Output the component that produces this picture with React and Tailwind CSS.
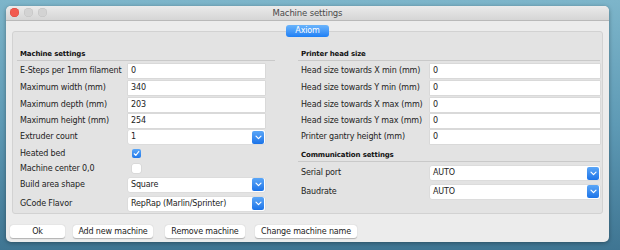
import React from "react";

const leftRows = [
  { label: "E-Steps per 1mm filament", type: "input", value: "0", h: "h-[17px]" },
  { label: "Maximum width (mm)", type: "input", value: "340", h: "h-[17px]" },
  { label: "Maximum depth (mm)", type: "input", value: "203", h: "h-[17px]" },
  { label: "Maximum height (mm)", type: "input", value: "254", h: "h-[16px]" },
  { label: "Extruder count", type: "select", value: "1", h: "h-[16px]" },
  { label: "Heated bed", type: "check", checked: true, h: "h-[17px]" },
  { label: "Machine center 0,0", type: "check", checked: false, h: "h-[13px]" },
  { label: "Build area shape", type: "select", value: "Square", h: "h-[19px]" },
  { label: "GCode Flavor", type: "select", value: "RepRap (Marlin/Sprinter)", h: "h-[19px]" },
];

const headRows = [
  { label: "Head size towards X min (mm)", value: "0", h: "h-[17px]" },
  { label: "Head size towards Y min (mm)", value: "0", h: "h-[17px]" },
  { label: "Head size towards X max (mm)", value: "0", h: "h-[17px]" },
  { label: "Head size towards Y max (mm)", value: "0", h: "h-[16px]" },
  { label: "Printer gantry height (mm)", value: "0", h: "h-[16px]" },
];

const commRows = [
  { label: "Serial port", value: "AUTO", h: "h-[18px]" },
  { label: "Baudrate", value: "AUTO", h: "h-[19px]" },
];

const TextField = ({ value }) => (
  <div className="flex-1 h-[14px] bg-white shadow-[0_0_0_0.5px_#cfcfcf] flex items-center pl-[3px] text-[#222]">
    {value}
  </div>
);

const SelectField = ({ value }) => (
  <div className="flex-1 h-[14px] bg-white shadow-[0_0_0_0.5px_#d6d6d6] flex items-center pl-[3px] text-[#222] rounded-[2px]">
    <span className="flex-1">{value}</span>
    <div className="w-[12px] h-[13px] rounded-[2px] bg-gradient-to-b from-[#5aa6f7] to-[#1a73e8] flex items-center justify-center mr-[1px]">
      <svg width="7" height="5" viewBox="0 0 7 5">
        <path d="M1 1.2 L3.5 3.7 L6 1.2" stroke="white" strokeWidth="1.2" fill="none" strokeLinecap="round" strokeLinejoin="round" />
      </svg>
    </div>
  </div>
);

const CheckBox = ({ checked }) =>
  checked ? (
    <div className="ml-[4px] w-[9px] h-[9px] rounded-[2px] bg-gradient-to-b from-[#5aa6f7] to-[#1f78ea] flex items-center justify-center">
      <svg width="7" height="7" viewBox="0 0 7 7">
        <path d="M1.2 3.8 L2.8 5.3 L5.8 1.5" stroke="white" strokeWidth="1.2" fill="none" strokeLinecap="round" strokeLinejoin="round" />
      </svg>
    </div>
  ) : (
    <div className="ml-[4px] w-[9px] h-[9px] rounded-[2px] bg-white shadow-[0_0_0_0.5px_#cfcfcf]" />
  );

const SectionHeading = ({ children, className = "" }) => (
  <div className={`h-[12px] flex items-center pl-[3px] border-b border-[#c9c9c9] font-bold text-[7px] text-[#111] ${className}`}>
    {children}
  </div>
);

const Button = ({ children, w }) => (
  <div className={`${w} h-[13px] bg-white rounded-[3px] shadow-[0_0.5px_1px_rgba(0,0,0,0.25)] flex items-center justify-center text-[#222]`}>
    {children}
  </div>
);

export default function App() {
  return (
    <div className="w-[620px] h-[250px] overflow-hidden bg-gradient-to-b from-[#7db5ca] via-[#5e9ab5] to-[#3f7592] pt-[6px] pl-[6px] font-['DejaVu_Sans',sans-serif] text-[8px] tracking-[-0.15px] leading-none">
      <div className="w-[603px] h-[236px] bg-[#ececec] rounded-[5px] shadow-[0_1px_4px_rgba(0,0,0,0.35)] overflow-hidden flex flex-col">
        {/* title bar */}
        <div className="relative h-[15px] bg-gradient-to-b from-[#ebebeb] to-[#d5d5d5] border-b border-[#b9b9b9] flex items-center justify-center">
          <div className="absolute left-[4px] top-[2px] flex gap-[5px]">
            <div className="w-[9px] h-[9px] rounded-full bg-[#f25a4f] shadow-[inset_0_0_0_0.5px_#d9473d]" />
            <div className="w-[9px] h-[9px] rounded-full bg-[#d3d3d3] shadow-[inset_0_0_0_0.5px_#c0c0c0]" />
            <div className="w-[9px] h-[9px] rounded-full bg-[#d3d3d3] shadow-[inset_0_0_0_0.5px_#c0c0c0]" />
          </div>
          <span className="text-[#4a4a4a] text-[8.5px]">Machine settings</span>
        </div>

        <div className="px-[6px] pt-[4px]">
          {/* tab */}
          <div className="relative z-10 flex justify-center">
            <div className="w-[43px] h-[12px] rounded-[3px] bg-gradient-to-b from-[#6ab4fb] to-[#1c7ff5] text-white flex items-center justify-center">
              Axiom
            </div>
          </div>

          {/* panel */}
          <div className="-mt-[6px] h-[183px] bg-[#e3e3e3] border border-[#d2d2d2] rounded-[3px] flex pl-[4px] pr-[2px]">
            <div className="w-[258px] pt-[17px] flex flex-col">
              <SectionHeading>Machine settings</SectionHeading>
              <div className="mt-[1px]">
                {leftRows.map((r) => (
                  <div key={r.label} className={`${r.h} flex items-center pr-[10px]`}>
                    <div className="w-[111px] pl-[3px] text-[#222] whitespace-nowrap">{r.label}</div>
                    {r.type === "input" && <TextField value={r.value} />}
                    {r.type === "select" && <SelectField value={r.value} />}
                    {r.type === "check" && <CheckBox checked={r.checked} />}
                  </div>
                ))}
              </div>
            </div>

            <div className="flex-1 ml-[23px] pt-[17px] flex flex-col">
              <SectionHeading>Printer head size</SectionHeading>
              <div className="mt-[1px]">
                {headRows.map((r) => (
                  <div key={r.label} className={`${r.h} flex items-center`}>
                    <div className="w-[132px] pl-[3px] text-[#222] whitespace-nowrap">{r.label}</div>
                    <TextField value={r.value} />
                  </div>
                ))}
              </div>
              <SectionHeading className="mt-[5px]">Communication settings</SectionHeading>
              <div className="mt-[2px]">
                {commRows.map((r) => (
                  <div key={r.label} className={`${r.h} flex items-center`}>
                    <div className="w-[132px] pl-[3px] text-[#222] whitespace-nowrap">{r.label}</div>
                    <SelectField value={r.value} />
                  </div>
                ))}
              </div>
            </div>
          </div>
        </div>

        {/* buttons */}
        <div className="flex items-center pl-[4px] mt-[11px]">
          <Button w="w-[55px]">Ok</Button>
          <div className="ml-[8px]"><Button w="w-[80px]">Add new machine</Button></div>
          <div className="ml-[12px]"><Button w="w-[80px]">Remove machine</Button></div>
          <div className="ml-[10px]"><Button w="w-[102px]">Change machine name</Button></div>
        </div>
      </div>
    </div>
  );
}
